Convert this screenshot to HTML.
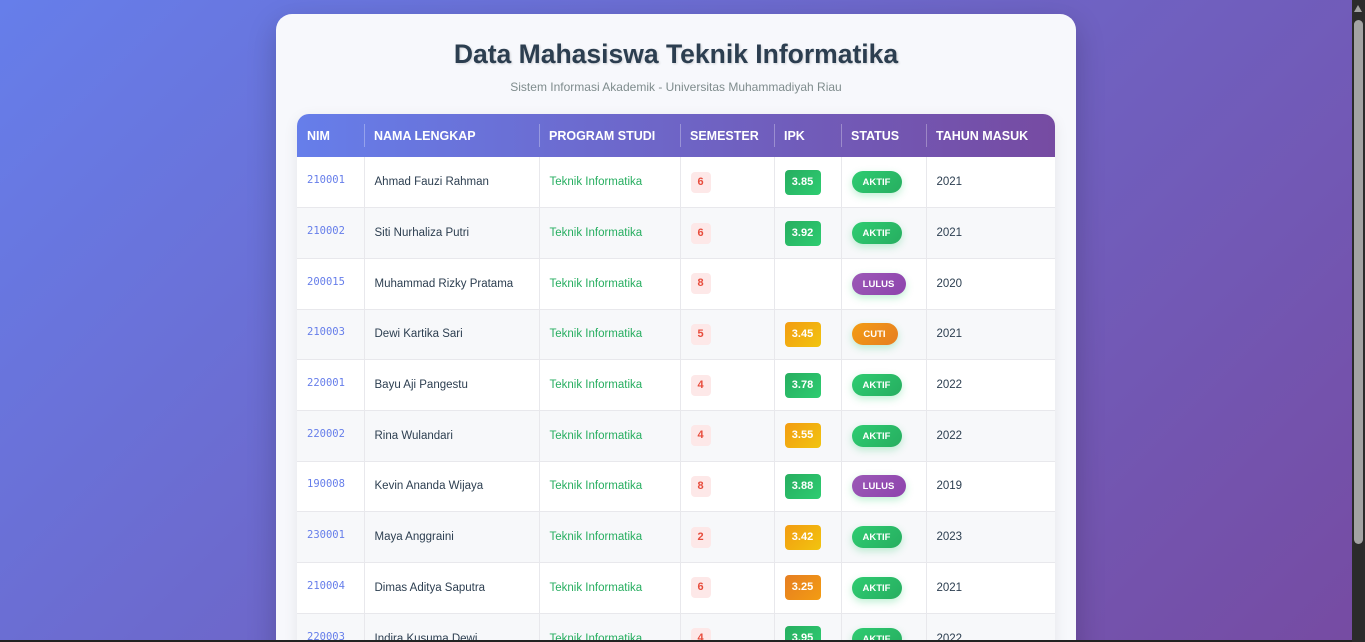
<!DOCTYPE html>
<html><head><meta charset="utf-8"><style>
*{box-sizing:border-box;margin:0;padding:0}
html,body{width:1365px;height:642px;overflow:hidden}
body{background:linear-gradient(135deg,#667eea 0%,#764ba2 100%);font-family:"Liberation Sans","DejaVu Sans",sans-serif;position:relative}
.sb{position:absolute;right:0;top:0;width:13px;height:642px;background:#2b2b2b}
.sb .th{position:absolute;left:2px;top:20px;width:9px;height:524px;background:#a3a3a3;border-radius:5px}
.sb .up{position:absolute;left:2px;top:5px;width:0;height:0;border-left:4.5px solid transparent;border-right:4.5px solid transparent;border-bottom:7px solid #a3a3a3}
.bot{position:absolute;left:0;bottom:0;width:1352px;height:2px;background:#222}
.card{position:absolute;left:276px;top:14px;width:800px;height:700px;background:#f7f8fc;border-radius:16px;box-shadow:0 10px 30px rgba(0,0,0,.2)}
h1{position:absolute;top:25px;width:100%;text-align:center;font-size:26.5px;font-weight:bold;color:#2c3e50;text-shadow:1px 1px 2px rgba(0,0,0,.15)}
.sub{position:absolute;top:66px;width:100%;text-align:center;font-size:12px;color:#7f8c8d}
.tw{position:absolute;left:21px;top:100px;width:758px;border-radius:12px 12px 0 0;overflow:hidden;box-shadow:0 4px 15px rgba(0,0,0,.08)}
table{border-collapse:collapse;width:758px;table-layout:fixed}
th{height:43px;color:#fff;font-size:12.5px;font-weight:bold;text-align:left;padding-left:10px;position:relative}
thead tr{background:linear-gradient(90deg,#667eea,#764ba2)}
th+th:before{content:"";position:absolute;left:0;top:10px;height:23px;width:1px;background:rgba(255,255,255,.3)}
td{height:50.7px;border:1px solid #e8e8ec;border-top:none;font-size:11.5px;color:#2c3e50;padding-left:10px}
td:first-child{border-left:none}td:last-child{border-right:none}
tbody tr td{background:#fff}
tbody tr:nth-child(even) td{background:#f7f8fa}
.nim{font-family:"DejaVu Sans Mono",monospace;font-size:10.5px;color:#667eea;position:relative;top:-2px}
.ps{color:#27ae60}
.sem{display:inline-block;width:20px;height:21px;line-height:21px;text-align:center;background:#fde8e8;color:#e74c3c;font-weight:bold;font-size:11px;border-radius:4px}
.ipk{display:inline-block;width:36px;height:25px;line-height:25px;text-align:center;color:#fff;font-weight:bold;font-size:11px;border-radius:4px}
.g{background:linear-gradient(135deg,#27ae60,#2ecc71)}
.y{background:linear-gradient(135deg,#f39c12,#f1c40f)}
.o{background:linear-gradient(135deg,#e67e22,#f39c12)}
.st{display:inline-block;width:50px;height:22px;line-height:23px;text-align:center;color:#fff;font-weight:bold;font-size:9.5px;border-radius:11px;box-shadow:0 3px 8px rgba(46,204,113,.3);vertical-align:middle}
.a{background:linear-gradient(135deg,#2ecc71,#27ae60)}
.l{background:linear-gradient(135deg,#9b59b6,#8e44ad);width:54px}
.c{background:linear-gradient(135deg,#f39c12,#e67e22);width:46px}
</style></head><body>
<div class="card">
<h1>Data Mahasiswa Teknik Informatika</h1>
<div class="sub">Sistem Informasi Akademik - Universitas Muhammadiyah Riau</div>
<div class="tw"><table>
<colgroup><col style="width:67px"><col style="width:175px"><col style="width:141px"><col style="width:94px"><col style="width:67px"><col style="width:85px"><col style="width:129px"></colgroup>
<thead><tr><th>NIM</th><th>NAMA LENGKAP</th><th>PROGRAM STUDI</th><th>SEMESTER</th><th>IPK</th><th>STATUS</th><th>TAHUN MASUK</th></tr></thead>
<tbody>
<tr><td><span class="nim">210001</span></td><td>Ahmad Fauzi Rahman</td><td class="ps">Teknik Informatika</td><td><span class="sem">6</span></td><td><span class="ipk g">3.85</span></td><td><span class="st a">AKTIF</span></td><td>2021</td></tr>
<tr><td><span class="nim">210002</span></td><td>Siti Nurhaliza Putri</td><td class="ps">Teknik Informatika</td><td><span class="sem">6</span></td><td><span class="ipk g">3.92</span></td><td><span class="st a">AKTIF</span></td><td>2021</td></tr>
<tr><td><span class="nim">200015</span></td><td>Muhammad Rizky Pratama</td><td class="ps">Teknik Informatika</td><td><span class="sem">8</span></td><td></td><td><span class="st l">LULUS</span></td><td>2020</td></tr>
<tr><td><span class="nim">210003</span></td><td>Dewi Kartika Sari</td><td class="ps">Teknik Informatika</td><td><span class="sem">5</span></td><td><span class="ipk y">3.45</span></td><td><span class="st c">CUTI</span></td><td>2021</td></tr>
<tr><td><span class="nim">220001</span></td><td>Bayu Aji Pangestu</td><td class="ps">Teknik Informatika</td><td><span class="sem">4</span></td><td><span class="ipk g">3.78</span></td><td><span class="st a">AKTIF</span></td><td>2022</td></tr>
<tr><td><span class="nim">220002</span></td><td>Rina Wulandari</td><td class="ps">Teknik Informatika</td><td><span class="sem">4</span></td><td><span class="ipk y">3.55</span></td><td><span class="st a">AKTIF</span></td><td>2022</td></tr>
<tr><td><span class="nim">190008</span></td><td>Kevin Ananda Wijaya</td><td class="ps">Teknik Informatika</td><td><span class="sem">8</span></td><td><span class="ipk g">3.88</span></td><td><span class="st l">LULUS</span></td><td>2019</td></tr>
<tr><td><span class="nim">230001</span></td><td>Maya Anggraini</td><td class="ps">Teknik Informatika</td><td><span class="sem">2</span></td><td><span class="ipk y">3.42</span></td><td><span class="st a">AKTIF</span></td><td>2023</td></tr>
<tr><td><span class="nim">210004</span></td><td>Dimas Aditya Saputra</td><td class="ps">Teknik Informatika</td><td><span class="sem">6</span></td><td><span class="ipk o">3.25</span></td><td><span class="st a">AKTIF</span></td><td>2021</td></tr>
<tr><td><span class="nim">220003</span></td><td>Indira Kusuma Dewi</td><td class="ps">Teknik Informatika</td><td><span class="sem">4</span></td><td><span class="ipk g">3.95</span></td><td><span class="st a">AKTIF</span></td><td>2022</td></tr>
</tbody></table></div>
</div>
<div class="bot"></div>
<div class="sb"><div class="up"></div><div class="th"></div></div>
</body></html>
